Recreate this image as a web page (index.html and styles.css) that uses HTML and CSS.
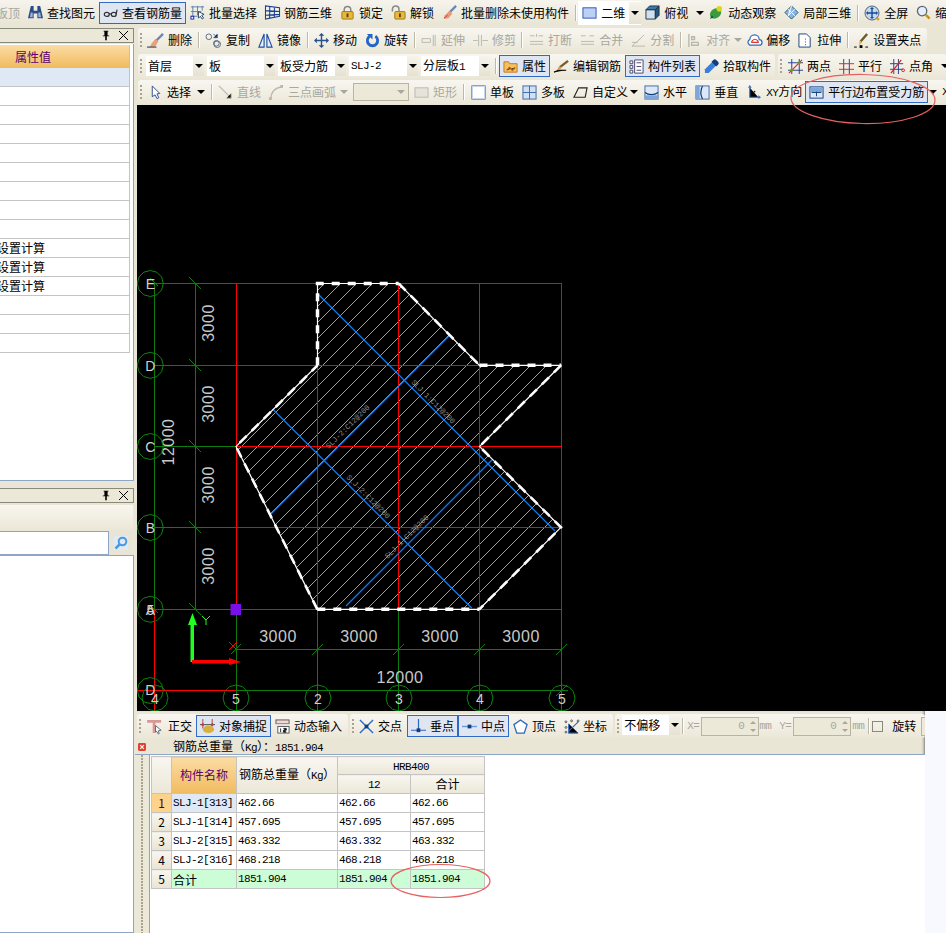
FILE: index.html
```html
<!DOCTYPE html>
<html lang="zh">
<head>
<meta charset="utf-8">
<title>钢筋总重量</title>
<link rel="stylesheet" href="styles.css">
</head>
<body>
<div class="app">
  <header class="topbar">
    <div class="tool off first">板顶</div>
    <div class="tool"><svg class="ic" viewBox="0 0 16 16"><path fill="#2b4c86" d="M3 1h3v5h4V1h3l3 13H10V9H6v5H0z"/><path fill="#9db4d8" d="M3 8h2v5H2zM11 8h2l1 5h-3z"/></svg>查找图元</div>
    <div class="tool on"><svg class="ic" viewBox="0 0 16 16"><g fill="none" stroke="#333" stroke-width="1.3"><ellipse cx="4" cy="10" rx="2.6" ry="2.2"/><ellipse cx="11.5" cy="10" rx="2.6" ry="2.2"/><path d="M6.5 9.5h2.4M14 10l1-5"/></g></svg>查看钢筋量</div>
    <div class="tool"><svg class="ic" viewBox="0 0 16 16"><path fill="none" stroke="#5a7fb5" d="M1 2h14M1 7h11M1 12h7M3 1v13M8 1v10M13 1v5"/><path fill="#fff" stroke="#246" d="M9 7l6 3-2.5 1 2 3-1.5 1-2-3-2 2z"/><rect x="1" y="12" width="3" height="3" fill="#fff" stroke="#12a"/></svg>批量选择</div>
    <div class="tool"><svg class="ic" viewBox="0 0 16 16"><path fill="none" stroke="#1c3f94" stroke-width="1.1" d="M.5 1v14l15-3V3zM.5 6l15 1M.5 11l15-1M5 1v13M10 2v11"/></svg>钢筋三维</div>
    <div class="tool"><svg class="ic" viewBox="0 0 16 16"><path fill="none" stroke="#888" stroke-width="1.6" d="M4.5 8V5a3.5 3.5 0 017 0v3"/><rect x="2" y="7" width="12" height="8" rx="1" fill="#e8b83c" stroke="#a07818"/><path fill="#5a4008" d="M7 9h2v4H7z"/></svg>锁定</div>
    <div class="tool"><svg class="ic" viewBox="0 0 16 16"><path fill="none" stroke="#888" stroke-width="1.6" d="M1.5 7V4.500a3.500 3.500 0 017 0V7"/><rect x="4" y="7" width="11" height="8" rx="1" fill="#e8b83c" stroke="#a07818"/><path fill="#5a4008" d="M8.500 9h2v4h-2z"/></svg>解锁</div>
    <div class="tool"><svg class="ic" viewBox="0 0 16 16"><path stroke="#6b86b8" stroke-width="2.500" d="M15 1L8 8"/><path fill="#e89a78" d="M8 6l3 3-4 5-5 1 1-4z"/><path stroke="#d34" d="M2 14l4-3"/></svg>批量删除未使用构件</div>
    <div class="sep"></div>
    <div class="tool white"><svg class="ic" viewBox="0 0 16 16"><rect x="1" y="3" width="14" height="11" fill="#bcd0f4" stroke="#2c50b8"/></svg>二维<span class="caret-box"><span class="caret"></span></span></div>
    <div class="tool pull"><svg class="ic" viewBox="0 0 16 16"><path fill="#cfe0f0" stroke="#234" d="M1 5h10v10H1z"/><path fill="#3c78a8" stroke="#234" d="M1 5l4-4h10l-4 4z"/><path fill="#22567e" stroke="#234" d="M11 5l4-4v10l-4 4z"/></svg>俯视<span class="caret gap-l"></span></div>
    <div class="tool"><svg class="ic" viewBox="0 0 16 16"><ellipse cx="7" cy="9" rx="6.500" ry="5" fill="#3e9a3e" transform="rotate(-35 7 9)"/><circle cx="11" cy="4" r="3" fill="#d8d820"/><path fill="#155" d="M1 15l4-2-2-2z"/></svg>动态观察</div>
    <div class="tool"><svg class="ic" viewBox="0 0 16 16"><path fill="#8ab4e4" stroke="#256" d="M1 8l7-7 7 7-7 7z"/><path stroke="#fff" d="M4.500 4.500l7 7M8 1l-3.500 10.500M11.500 4.500L4.500 11.500"/></svg>局部三维</div>
    <div class="sep"></div>
    <div class="tool"><svg class="ic big" viewBox="0 0 16 16"><circle cx="8" cy="8" r="7" fill="#c8d8ec" stroke="#567"/><path fill="none" stroke="#124a9c" stroke-width="1.400" d="M8 3v10M3 8h10"/><path fill="#124a9c" d="M8 2l2 2H6zM8 14l2-2H6zM2 8l2-2v4zM14 8l-2-2v4z"/><circle cx="14" cy="14" r="1.500" fill="#e8a020"/></svg>全屏</div>
    <div class="tool"><svg class="ic" viewBox="0 0 16 16"><circle cx="6.500" cy="6.500" r="5" fill="#e8eef8" stroke="#567" stroke-width="1.400"/><path stroke="#c89018" stroke-width="2.500" d="M10.500 10.500l4 4"/></svg>缩放</div>
  </header>

  <div class="main">
    <aside class="side">
      <div class="dock-head first-head"><svg class="pin" viewBox="0 0 10 12"><path fill="#000" d="M2 0h6v1H7v5h2v1H6v5H4V7H1V6h2V1H2z"/></svg><svg class="x" viewBox="0 0 9 9"><path stroke="#000" d="M0 0l9 9M9 0L0 9"/></svg></div>
      <div class="prop-panel">
        <div class="prop-hd">属性值</div>
        <div class="prop-row sel-row"></div>
        <div class="prop-row"></div><div class="prop-row"></div><div class="prop-row"></div>
        <div class="prop-row"></div><div class="prop-row"></div><div class="prop-row"></div>
        <div class="prop-row"></div><div class="prop-row"></div>
        <div class="prop-row cut">设置计算</div>
        <div class="prop-row cut">设置计算</div>
        <div class="prop-row cut">设置计算</div>
        <div class="prop-row"></div><div class="prop-row"></div><div class="prop-row"></div>
      </div>
      <div class="dock-head"><svg class="pin" viewBox="0 0 10 12"><path fill="#000" d="M2 0h6v1H7v5h2v1H6v5H4V7H1V6h2V1H2z"/></svg><svg class="x" viewBox="0 0 9 9"><path stroke="#000" d="M0 0l9 9M9 0L0 9"/></svg></div>
      <div class="band"></div>
      <div class="search">
        <div class="search-box"></div>
        <svg class="search-ic" viewBox="0 0 14 14"><rect width="14" height="14" fill="#dfeaf6"/><circle cx="8.500" cy="5.500" r="3.800" fill="none" stroke="#4a9ae0" stroke-width="2"/><path stroke="#4a9ae0" stroke-width="2.500" d="M5.500 8.500L1.500 12.500"/></svg>
      </div>
      <div class="tree"></div>
    </aside>

    <div class="work">
      <div class="rows">
        <div class="row">
          <div class="pill">
            <span class="grip"></span>
            <div class="tool"><svg class="ic wide" viewBox="0 0 18 16"><path stroke="#6b86b8" stroke-width="2.500" d="M17 1L10 8"/><path fill="#e8a078" d="M9 6l3 3-3 5-6 1 2-4z"/><path stroke="#123" d="M0 15h10"/></svg>删除</div>
            <div class="sep"></div>
            <div class="tool"><svg class="ic wide" viewBox="0 0 18 16"><g fill="none" stroke="#5a6a80"><circle cx="4" cy="4" r="3"/><circle cx="12" cy="11" r="3"/><circle cx="13" cy="12" r="3.500"/></g><path stroke="#2c6ac0" d="M9 1l4 4M13 1v4H9"/></svg>复制</div>
            <div class="tool"><svg class="ic" viewBox="0 0 16 16"><path fill="#e6eefa" stroke="#1e4fa0" stroke-width="1.200" d="M6.500 1v14H1zM9.500 1v14H15z"/></svg>镜像</div>
            <div class="sep"></div>
            <div class="tool"><svg class="ic" viewBox="0 0 16 16"><path stroke="#25528f" stroke-width="1.500" d="M8 2v12M2 8h12"/><path fill="#25528f" d="M8 0l3 3H5zM8 16l3-3H5zM0 8l3-3v6zM16 8l-3-3v6z"/></svg>移动</div>
            <div class="tool"><svg class="ic" viewBox="0 0 16 16"><path fill="none" stroke="#2466c8" stroke-width="3" d="M5 3.500a5.500 5.500 0 106 0"/><path fill="#2466c8" d="M2 1h6v6z"/></svg>旋转</div>
            <div class="sep"></div>
            <div class="tool off shift"><svg class="ic" viewBox="0 0 16 16"><path fill="none" stroke="#b8b8b0" d="M0 6h9v4H0zM12 2v12M14 2v12"/></svg>延伸</div>
            <div class="tool off pull1"><svg class="ic" viewBox="0 0 16 16"><path fill="none" stroke="#b8b8b0" d="M6 2v12M9 2v12M0 8h5M10 8h6"/></svg>修剪</div>
            <div class="sep"></div>
            <div class="tool off shift"><svg class="ic" viewBox="0 0 16 16"><path fill="none" stroke="#b8b8b0" d="M1 3h5M10 3h5M1 12h14M1 9h14M8 1v3"/></svg>打断</div>
            <div class="tool off"><svg class="ic" viewBox="0 0 16 16"><path fill="none" stroke="#b8b8b0" d="M1 3h5M10 3h5M1 12h14M1 9h14"/></svg>合并</div>
            <div class="tool off"><svg class="ic" viewBox="0 0 16 16"><path fill="none" stroke="#b8b8b0" d="M1 14h14M1 14L10 6M14 2L7 9M1 10h6"/></svg>分割</div>
            <div class="sep"></div>
            <div class="tool off pull"><svg class="ic" viewBox="0 0 16 16"><path fill="none" stroke="#b8b8b0" stroke-width="1.500" d="M2 1v14M5 4h3v3H5zM5 10h7v3H5z"/></svg>对齐<span class="caret gray"></span></div>
            <div class="tool"><svg class="ic" viewBox="0 0 16 16"><path fill="#fff" stroke="#2c6ac0" stroke-width="1.300" d="M2 12a3 3 0 011-5 5 5 0 0110 0 3 3 0 010 6H3z"/><path fill="none" stroke="#d33" stroke-width="1.200" d="M5 10a2 2 0 011-2 3 3 0 015 0 2 2 0 011 2z"/></svg>偏移</div>
            <div class="tool"><svg class="ic" viewBox="0 0 16 16"><path fill="#fff" stroke="#1c3f78" d="M1 1h8l4 4v10H1z"/><path stroke="#1c3f78" stroke-dasharray="1 2" d="M8 6v8"/></svg>拉伸</div>
            <div class="sep"></div>
            <div class="tool"><svg class="ic" viewBox="0 0 16 16"><path stroke="#6a5a30" stroke-width="2.500" d="M14 1L7 9"/><path fill="#e8b83c" d="M6 8l3 2-4 3z"/><path stroke="#000" d="M0 15h3M12 15h3"/><rect x="6" y="13" width="3" height="3"/></svg>设置夹点</div>
          </div>
        </div>
        <div class="row">
          <div class="pill flush">
            <span class="grip"></span>
            <div class="sel w58"><span>首层</span><span class="caret-box"><span class="caret"></span></span></div>
            <div class="sel w68"><span>板</span><span class="caret-box"><span class="caret"></span></span></div>
            <div class="sel w68"><span>板受力筋</span><span class="caret-box"><span class="caret"></span></span></div>
            <div class="sel w69"><span class="m">SLJ-2</span><span class="caret-box"><span class="caret"></span></span></div>
            <div class="sel w69"><span>分层板<span class="m">1</span></span><span class="caret-box"><span class="caret"></span></span></div>
            <div class="sep"></div>
            <div class="tool on shift"><svg class="ic" viewBox="0 0 16 16"><path fill="#f4c060" stroke="#c07818" d="M1 3h5l1 2h8v9H1z"/><path stroke="#b06010" stroke-width="1.500" d="M4 12l3-3 3 3 3-3"/></svg>属性</div>
            <div class="tool"><svg class="ic" viewBox="0 0 16 16"><path stroke="#7a5a30" stroke-width="2.500" d="M15 2L6 9"/><path fill="#d8a040" d="M6 7l2 3-5 2z"/><path stroke="#000" stroke-width="1.300" d="M0 14l5-2h8"/></svg>编辑钢筋</div>
            <div class="tool on"><svg class="ic" viewBox="0 0 16 16"><g fill="#fff" stroke="#446"><path d="M1 2h3v3H1zM1 7h3v3H1zM1 12h3v3H1z"/><path d="M6 1h9v14H6z"/></g><path stroke="#446" d="M8 4h5M8 8h5M8 12h5"/></svg>构件列表</div>
            <div class="tool"><svg class="ic" viewBox="0 0 16 16"><path fill="#3a80d8" d="M9 3l4 4-8 8H1v-4z"/><path fill="#123e7c" d="M10 1a2 2 0 013 0l2 2a2 2 0 010 3l-2 2-5-5z"/></svg>拾取构件</div>
          </div>
          <div class="pill second">
            <span class="grip"></span>
            <div class="tool"><svg class="ic" viewBox="0 0 16 16"><path stroke="#1c3f94" d="M4 0v16M12 0v16M0 4h16M0 12h16"/><path stroke="#e02020" stroke-width="1.200" d="M1 15L15 1"/><circle cx="4" cy="12" r="1.500" fill="#6a9a20"/><circle cx="12" cy="4" r="1.500" fill="#6a9a20"/></svg>两点</div>
            <div class="tool"><svg class="ic" viewBox="0 0 16 16"><path stroke="#1c3f94" d="M5 0v16M11 0v16"/><path stroke="#e02020" d="M0 5h16M0 11h16"/></svg>平行</div>
            <div class="tool"><svg class="ic" viewBox="0 0 16 16"><path stroke="#1c3f94" d="M4 0v16M9 0v16M0 5h14M0 11h14"/><path stroke="#e02020" stroke-width="1.300" d="M1 15L12 1"/><circle cx="14" cy="12" r="1.500" fill="none" stroke="#e02020"/></svg>点角<span class="caret gap-l"></span></div>
          </div>
        </div>
        <div class="row">
          <div class="pill fill">
            <span class="grip"></span>
            <div class="tool pick"><svg class="ic narrow" viewBox="0 0 10 16"><path fill="#fff" stroke="#2a4a90" d="M1 1l8 8-3 .5 2 4-2 1-2-4-3 2z"/></svg>选择<span class="caret"></span></div>
            <div class="sep"></div>
            <div class="tool off"><svg class="ic" viewBox="0 0 16 16"><path stroke="#b8b8b0" stroke-width="1.300" d="M1 1l13 13"/><path stroke="#b8b8b0" d="M14 9v5H9"/></svg>直线</div>
            <div class="tool off"><svg class="ic" viewBox="0 0 16 16"><path fill="none" stroke="#b8b8b0" stroke-width="1.300" d="M2 15C2 8 6 3 14 2"/><rect x="0" y="13" width="3" height="3" fill="#b8b8b0"/><rect x="12" y="0" width="3" height="3" fill="#b8b8b0"/></svg>三点画弧<span class="caret gray"></span></div>
            <div class="dis-sel"><span class="caret gray"></span></div>
            <div class="tool off"><svg class="ic" viewBox="0 0 16 16"><rect x="1" y="3" width="14" height="10" fill="#e6e4da" stroke="#b8b8b0"/></svg>矩形</div>
            <div class="sep"></div>
            <div class="tool shift"><svg class="ic" viewBox="0 0 16 16"><rect x="1" y="1" width="14" height="14" fill="#fff" stroke="#2c50b8"/><rect x="1.500" y="1.500" width="13" height="13" fill="none" stroke="#c8d8f4"/></svg>单板</div>
            <div class="tool"><svg class="ic" viewBox="0 0 16 16"><rect x="1" y="1" width="14" height="14" fill="#cfe0f4" stroke="#3c68a8"/><path stroke="#3c68a8" d="M8 1v14M1 8h14"/></svg>多板</div>
            <div class="tool pull2"><svg class="ic" viewBox="0 0 16 16"><path fill="none" stroke="#222" stroke-width="1.200" d="M6 3h9l-2 10H1z"/></svg>自定义<span class="caret back"></span></div>
            <div class="tool"><svg class="ic" viewBox="0 0 16 16"><rect x="1" y="1" width="14" height="14" fill="#dce8f8" stroke="#3c68a8"/><path fill="none" stroke="#123e7c" stroke-width="1.300" d="M1 8c4 3 10 3 14 0"/><rect x="1" y="11" width="14" height="4" fill="#7ea6d8"/></svg>水平</div>
            <div class="tool"><svg class="ic" viewBox="0 0 16 16"><rect x="1" y="1" width="14" height="14" fill="#dce8f8" stroke="#3c68a8"/><rect x="1" y="1" width="4" height="14" fill="#7ea6d8"/><path fill="none" stroke="#123e7c" stroke-width="1.300" d="M8 1c-2 4-2 10 0 14"/></svg>垂直</div>
            <div class="tool xy pull1"><svg class="ic wide" viewBox="0 0 18 16"><path stroke="#2c6ac0" stroke-width="1.200" d="M4 3v10h9"/><path fill="#2c6ac0" d="M4 0l2 3H2zM16 13l-3-2v4z"/><circle cx="9" cy="7" r="1" fill="#222"/></svg><span><span class="m">XY</span>方向</span></div>
            <div class="tool on"><svg class="ic" viewBox="0 0 16 16"><rect x="1" y="2" width="14" height="12" fill="#dce8f8" stroke="#123e7c"/><path fill="#7ea6d8" d="M2 3h12v5H2z"/><path stroke="#123e7c" d="M8 7v5M3 8h10"/></svg>平行边布置受力筋</div>
            <span class="caret gap-s"></span>
            <span class="trail m">X</span>
          </div>
        </div>
      </div>

      <svg class="cad" viewBox="137 105 809 606" role="img" aria-label="板受力筋布置图">
        <defs>
          <pattern id="hatch" patternUnits="userSpaceOnUse" width="16" height="16">
            <path d="M-2 18L18 -2M-2 2L2 -2M14 18L18 14" stroke="#c8c8c8" stroke-width=".8"/>
          </pattern>
          <polygon id="bubble" points="13,0 11.300,6.500 6.500,11.300 0,13 -6.500,11.300 -11.300,6.500 -13,0 -11.300,-6.500 -6.500,-11.300 0,-13 6.500,-11.300 11.300,-6.500" fill="none" stroke="#0c860c"/>
        </defs>
        <rect x="137" y="105" width="809" height="606" fill="#000"/>
        <g class="gl">
          <path d="M154.500 283.500H236M154.500 365.500H236M154.500 446.500H236M154.500 527.500H236M154.500 609.500H236M236 690.500H568M236 649.500H561"/>
          <path d="M154.500 283V609M195.500 283V609M236.500 609V711M317.500 609V711M398.500 609V711M479.500 609V711M561.500 609V711"/>
          <path d="M189 277l12 12M189 359l12 12M189 440l12 12M189 521l12 12M189 603l12 12M150 278l8 8M150 605l8 8M231 654l10-10M312 655l11-11M393 655l11-11M474 655l11-11M556 655l11-11M556 696l11-11"/>
        </g>
        <path fill="url(#hatch)" d="M317.500 283.500H398.700L479.500 365.300H561L479.500 446.500L561 527.300L479.300 609.300H317.300L236 446.500L317.500 365.300Z"/>
        <g class="rl">
          <path d="M236 283.500H561.500M236 365.500H561.500M236 446.500H561.500M236 527.500H561.500M236 609.500H561.500M137 690.500H236"/>
          <path d="M236.500 283V609M317.500 283V609M398.500 283V609M479.500 283V609M561.500 283V609M154.500 609V711"/>
        </g>
        <g class="bl">
          <path d="M318 294L555 531M272.500 409L471.700 608M450 335L271 514M492.700 459.300L346 606"/>
        </g>
        <path class="edge-thin" d="M317.500 283.500H398.700L479.500 365.300H561L479.500 446.500L561 527.300L479.300 609.300H317.300L236 446.500L317.500 365.300Z"/>
        <path class="edge-dash" d="M317.500 365.300V283.500H398.700M479.500 365.300H561M317.300 609.300H479.300"/>
        <path class="edge-diag" d="M398.700 283.500L479.500 365.300M561 365.300L479.500 446.500L561 527.300L479.300 609.300M317.300 609.300L236 446.500L317.500 365.300"/>
        <g class="lbl">
          <text transform="translate(433 402) rotate(45)">SLJ-1:C12@200</text>
          <text transform="translate(348 427) rotate(-45)">SLJ-2:C12@200</text>
          <text transform="translate(368 497) rotate(45)">SLJ-2:C12@200</text>
          <text transform="translate(407 537) rotate(-45)">SLJ-1:C12@200</text>
        </g>
        <g class="dim">
          <text transform="translate(210 323) rotate(-90)">3000</text>
          <text transform="translate(210 404) rotate(-90)">3000</text>
          <text transform="translate(210 485) rotate(-90)">3000</text>
          <text transform="translate(210 566) rotate(-90)">3000</text>
          <text transform="translate(170 442) rotate(-90)">12000</text>
          <text x="278" y="638">3000</text>
          <text x="359" y="638">3000</text>
          <text x="440" y="638">3000</text>
          <text x="521" y="638">3000</text>
          <text x="400" y="679">12000</text>
        </g>
        <use href="#bubble" x="150.300" y="283.500"/>
        <use href="#bubble" x="150.300" y="365.300"/>
        <use href="#bubble" x="150.300" y="446.500"/>
        <use href="#bubble" x="150.300" y="527.500"/>
        <use href="#bubble" x="150.300" y="609.300"/>
        <use href="#bubble" x="150.300" y="690.500"/>
        <use href="#bubble" x="155" y="698"/>
        <use href="#bubble" x="236" y="698"/>
        <use href="#bubble" x="318" y="698"/>
        <use href="#bubble" x="399" y="698"/>
        <use href="#bubble" x="480" y="698"/>
        <use href="#bubble" x="562" y="698"/>
        <g class="axis">
          <text x="150.300" y="284">E</text>
          <text x="150.300" y="366">D</text>
          <text x="150.300" y="447">C</text>
          <text x="150.300" y="528">B</text>
          <text x="150.300" y="610">A</text>
          <text x="150.300" y="610">5</text>
          <text x="150.300" y="690">D</text>
          <text x="155" y="699">4</text>
          <text x="236" y="699">5</text>
          <text x="318" y="699">2</text>
          <text x="399" y="699">3</text>
          <text x="480" y="699">4</text>
          <text x="562" y="699">5</text>
        </g>
        <rect x="230.500" y="604" width="10.500" height="11" fill="#7a10e8"/>
        <path fill="#1eff1e" d="M190.500 662V625H188L192.500 613L197 625H194V662Z"/>
        <path fill="#f00" d="M192 660H229V658L241 662L229 665V663.500H192Z"/>
        <path fill="none" stroke="#1eff1e" d="M202 616l4 4 4-4M206 620v5"/>
        <path fill="none" stroke="#f00" d="M229 642l8 8M237 642l-8 8"/>
      </svg>

      <section class="bottom">
        <div class="bottom-main">
          <div class="snapbar">
            <div class="pill">
              <span class="grip"></span>
              <div class="tool shift"><svg class="ic wide" viewBox="0 0 18 16"><path fill="#d89898" d="M0 1h15v3H9v11H6V4H0z"/><path fill="#fff" stroke="#567" d="M9 7l6 5-3 .5 1 3-1 .5-2-3-1 1z"/></svg>正交</div>
              <div class="tool on"><svg class="ic" viewBox="0 0 16 16"><path stroke="#a84040" d="M3 0v10M13 0v8"/><path stroke="#444" d="M0 6h16"/><ellipse cx="9" cy="11" rx="6" ry="4" fill="#d8b040"/><circle cx="3" cy="6" r="1.500" fill="#c04040"/><circle cx="13" cy="6" r="1.500" fill="#c04040"/></svg>对象捕捉</div>
              <div class="tool"><svg class="ic" viewBox="0 0 16 16"><rect x="1" y="1" width="14" height="4" fill="#f4d8d0" stroke="#555"/><rect x="1" y="5" width="14" height="2" fill="#ddd"/><rect x="3" y="8" width="12" height="7" fill="#fff" stroke="#555"/><path stroke="#222" d="M6 10v4M9 10h3v2H9v2h3"/></svg>动态输入</div>
            </div>
            <div class="pill">
              <span class="grip"></span>
              <div class="tool"><svg class="ic" viewBox="0 0 16 16"><path stroke="#2c6ac0" stroke-width="1.500" d="M1 1l14 14M15 1L1 15"/><rect x="6" y="6" width="4" height="4" fill="#123e7c"/></svg>交点</div>
              <div class="tool on shift"><svg class="ic" viewBox="0 0 16 16"><path stroke="#2c6ac0" stroke-width="1.300" d="M8 0v12M0 12h16"/><rect x="6" y="10" width="4" height="4" fill="#123e7c"/></svg>垂点</div>
              <div class="tool on"><svg class="ic" viewBox="0 0 16 16"><path stroke="#6a9ae0" stroke-width="1.500" d="M0 8h16"/><rect x="6" y="6" width="4" height="4" fill="#123e7c"/></svg>中点</div>
              <div class="tool"><svg class="ic" viewBox="0 0 16 16"><path fill="#fff" stroke="#2c6ac0" stroke-width="1.400" d="M8 1l7 5-3 9H4L1 6z"/></svg>顶点</div>
              <div class="tool snug"><svg class="ic wide" viewBox="0 0 18 16"><path stroke="#2c6ac0" stroke-width="1.200" d="M5 5v10h10M5 13L15 3"/><g fill="none" stroke="#333" stroke-width=".8"><circle cx="2" cy="3" r="1"/><circle cx="2" cy="9" r="1"/><circle cx="2" cy="14" r="1"/><circle cx="15" cy="2" r="1"/><circle cx="8" cy="2" r="1"/></g></svg>坐标</div>
            </div>
            <div class="pill last">
              <span class="grip"></span>
              <div class="sel w58 top-al"><span>不偏移</span><span class="caret-box"><span class="caret"></span></span></div>
              <div class="sep"></div>
              <span class="dim-lbl x-lbl m">X=</span>
              <div class="spin"><span class="m">0</span><span class="spin-arrows"><i class="up"></i><i class="dn"></i></span></div>
              <span class="dim-lbl m">mm</span>
              <span class="dim-lbl m y-lbl">Y=</span>
              <div class="spin"><span class="m">0</span><span class="spin-arrows"><i class="up"></i><i class="dn"></i></span></div>
              <span class="dim-lbl mm2 m">mm</span>
              <div class="sep"></div>
              <span class="check"></span>
              <span class="rot">旋转</span>
              <span class="spin cut-spin"></span>
            </div>
          </div>
          <div class="report-title">
            <svg class="close" viewBox="0 0 11 11"><rect width="11" height="11" rx="2" fill="#e04030"/><path stroke="#fff" stroke-width="1.500" d="M3 3l5 5M8 3L3 8"/></svg>
            <span>钢筋总重量（<span class="m">Kg</span>）：<span class="m">1851.904</span></span>
          </div>
          <div class="report">
            <div class="strip"></div>
            <div class="report-body">
              <table class="grid">
                <colgroup><col class="c0"><col class="c1"><col class="c2"><col class="c3"><col class="c4"></colgroup>
                <thead>
                  <tr class="h1"><th rowspan="2" class="rh"></th><th rowspan="2" class="orange">构件名称</th><th rowspan="2" class="left">钢筋总重量（<span class="m">Kg</span>）</th><th colspan="2"><span class="m">HRB400</span></th></tr>
                  <tr class="h2"><th><span class="m">12</span></th><th>合计</th></tr>
                </thead>
                <tbody>
                  <tr class="cur"><th class="rh">1</th><td class="m">SLJ-1[313]</td><td class="m">462.66</td><td class="m">462.66</td><td class="m">462.66</td></tr>
                  <tr><th class="rh">2</th><td class="m">SLJ-1[314]</td><td class="m">457.695</td><td class="m">457.695</td><td class="m">457.695</td></tr>
                  <tr><th class="rh">3</th><td class="m">SLJ-2[315]</td><td class="m">463.332</td><td class="m">463.332</td><td class="m">463.332</td></tr>
                  <tr><th class="rh">4</th><td class="m">SLJ-2[316]</td><td class="m">468.218</td><td class="m">468.218</td><td class="m">468.218</td></tr>
                  <tr class="sum"><th class="rh">5</th><td>合计</td><td class="m">1851.904</td><td class="m">1851.904</td><td class="m">1851.904</td></tr>
                </tbody>
              </table>
            </div>
          </div>
        </div>
        <div class="outside"></div>
      </section>
    </div>
  </div>

  <svg class="marks" viewBox="0 0 946 933" aria-hidden="true">
    <ellipse cx="863" cy="99" rx="72" ry="24.500" transform="rotate(1 863 99)"/>
    <ellipse cx="440.500" cy="881" rx="49.500" ry="16.500"/>
  </svg>
</div>
</body>
</html>
```
FILE: styles.css
```css
* { box-sizing: border-box; }
html, body { margin: 0; padding: 0; }
body { font: 12px/1 "Noto Sans CJK SC", "Liberation Sans", sans-serif; color: #000; background: #ece9d8; }
.app { position: relative; width: 946px; height: 933px; overflow: hidden; background: #eae6d6; }
.m { font-family: "Liberation Mono", "Noto Sans CJK SC", monospace; font-size: 11px; letter-spacing: -.6px; }

/* top bar */
.topbar { display: flex; align-items: center; height: 25px; overflow: hidden; white-space: nowrap;
  background: linear-gradient(#f6f4ec, #e9e5d5); }
.tool { display: flex; flex: none; align-items: center; gap: 4px; height: 22px; padding: 0 3px; white-space: nowrap; border: 1px solid transparent; }
.ic { flex: none; width: 15px; height: 15px; overflow: visible; }
.ic.wide { width: 17px; }
.ic.big { width: 16px; height: 16px; }
.ic.narrow { width: 10px; }
.tool.off { color: #a8a8a0; }
.tool.first { margin-left: -8px; }
.tool.on { background: #dfe6f2; border-color: #316ac5; }
.tool.white { background: #fff; height: 24px; padding-right: 0; gap: 4px; width: 63px; }
.tool.shift { margin-left: 1px; }
.tool.pull { margin-right: -3px; }
.tool.pull1 { margin-right: -1px; }
.tool.pull2 { margin-right: -2px; }
.tool.snug { gap: 2px; }
.sep { flex: none; width: 1px; height: 16px; margin: 0 2px; background: #bdb9a8; box-shadow: 1px 0 #fff; }
.caret { display: inline-block; flex: none; width: 0; height: 0; border: 4px solid transparent; border-top-color: #000; border-bottom: 0; }
.caret.gray { border-top-color: #a8a8a0; }
.caret.gap-l { margin-left: 4px; }
.caret.gap-s { margin-left: 1px; }
.caret.back { margin-left: -2px; }
.caret-box { display: flex; flex: none; align-items: center; justify-content: center; width: 11px; height: 100%; margin-left: auto; background: linear-gradient(#f6f4ec, #e6e2d2); }
.tool.white .caret-box { width: 12px; }

/* layout */
.main { display: flex; height: 908px; }
.side { display: flex; flex: none; flex-direction: column; width: 135px; height: 908px; background: #eae6d6; }
.work { display: flex; flex: none; flex-direction: column; width: 811px; height: 908px; }

/* dock */
.dock-head { display: flex; flex: none; align-items: center; justify-content: flex-end; gap: 9px; width: 134px; height: 15px; padding-right: 5px;
  background: #ebe8d8; border: 1px solid #8a8a7c; border-left: 0; }
.first-head { margin-top: 3px; }
.pin { width: 8px; height: 11px; }
.x { width: 9px; height: 9px; }
.prop-panel { flex: none; width: 134px; height: 437px; margin-top: 1px; margin-bottom: 7px; background: #fff; border-right: 1px solid #8ea6c6; border-bottom: 1px solid #8ea6c6; padding-right: 3px; }
.prop-hd { height: 23px; margin-top: 1px; padding: 5px 0 0 15px; color: #5a0070; background: linear-gradient(#fbdca4, #f1bb5f); border-right: 1px solid #c0c0c0; line-height: 14px; }
.prop-row { height: 19px; border-bottom: 1px solid #c4c4c4; border-right: 1px solid #c4c4c4; line-height: 18px; white-space: nowrap; overflow: hidden; }
.prop-row.sel-row { background: #dfe8f5; }
.prop-row.cut { text-indent: -3px; }
.band { flex: none; width: 133px; height: 25px; margin-top: 2px; background: linear-gradient(#f8f6ef, #ebe7d8); }
.search { display: flex; flex: none; align-items: center; width: 133px; height: 24px; margin-top: 1px; background: #e8e5d6; }
.search-box { width: 109px; height: 24px; background: #fff; border: 1px solid #8ea6c6; border-left: 0; }
.search-ic { width: 14px; height: 14px; margin-left: 5px; }
.tree { flex: 1; width: 134px; background: #fff; border: 1px solid #8ea6c6; border-left: 0; }

/* toolbars */
.rows { display: flex; flex: none; flex-direction: column; gap: 2px; height: 80px; padding: 3px 0 0 3px; overflow: hidden; }
.row { display: flex; flex: none; gap: 3px; height: 24px; }
.pill { display: flex; flex: none; align-items: center; height: 24px; padding-right: 2px; border-radius: 3px; background: linear-gradient(#f8f6f0, #ebe7d8); }
.pill.flush { padding-right: 0; }
.pill.fill { flex: 1; min-width: 0; overflow: hidden; padding-right: 0; }
.grip { flex: none; width: 2px; height: 15px; margin: 0 1px 0 2px; background: repeating-linear-gradient(#a8a490 0 2px, transparent 2px 4px); }
.second .grip { margin-right: 2px; }
.sel { display: flex; flex: none; align-items: center; justify-content: space-between; height: 20px; margin-right: 3px; padding-left: 2px; background: #fff; white-space: nowrap; }
.grip + .sel { margin-left: 3px; }
.w58 { width: 58px; }
.w68 { width: 68px; }
.w69 { width: 69px; }
.pill.second { padding-right: 0; flex: 1; min-width: 0; overflow: hidden; }
.tool.pick { gap: 6px; margin-left: 4px; }
.tool.xy { gap: 3px; }
.dis-sel { display: flex; flex: none; align-items: center; justify-content: flex-end; width: 56px; height: 18px; margin: 0 1px; padding-right: 3px; border: 1px solid #b8b4a0; background: #ece9d8; }
.trail { margin-left: 5px; }

/* canvas */
.cad { display: block; flex: none; width: 809px; height: 606px; margin-left: 2px; }
.gl path { fill: none; stroke: #0c7c0c; }
.rl path { fill: none; stroke: #f00; }
.bl path { fill: none; stroke: #1078f0; stroke-width: 1.300; }
.edge-thin { fill: none; stroke: #fff; stroke-width: 1.200; }
.edge-dash { fill: none; stroke: #fff; stroke-width: 3.500; stroke-dasharray: 8 8; }
.edge-diag { fill: none; stroke: #fff; stroke-width: 2.600; stroke-dasharray: 10 7; }
.lbl text { fill: #8c8c8c; font: 7.500px "Liberation Mono", monospace; text-anchor: middle; dominant-baseline: middle; }
.dim text { fill: #c8c8c8; font: 16px "Liberation Sans", sans-serif; text-anchor: middle; dominant-baseline: middle; letter-spacing: .5px; }
.axis text { fill: #d0d0d0; font: 14px "Liberation Sans", sans-serif; text-anchor: middle; dominant-baseline: central; }

/* bottom */
.bottom { display: flex; flex: 1; min-height: 0; }
.bottom-main { display: flex; flex: none; flex-direction: column; width: 790px; background: #eae6d6; box-shadow: inset -3px 0 3px -2px #777; }
.outside { flex: 1; background: #f8f9ff; }
.snapbar { display: flex; flex: none; gap: 2px; height: 27px; padding: 3px 0 0 2px; overflow: hidden; }
.pill.last { flex: 1; min-width: 0; padding-right: 0; overflow: hidden; }
.grip + .sel.top-al { align-self: flex-start; margin: 1px 0 0 2px; }
.dim-lbl { flex: none; margin-right: 2px; color: #a8a8a0; }
.x-lbl { margin-left: 2px; }
.y-lbl { margin-left: 6px; }
.mm2 { margin-left: 1px; }
.spin { display: flex; flex: none; align-items: center; justify-content: flex-end; width: 58px; height: 19px; padding-right: 2px; gap: 6px; border: 1px solid #b8b4a0; color: #a8a8a0; background: #ece9d8; }
.spin-arrows { display: flex; flex-direction: column; gap: 5px; }
.spin-arrows i { display: block; width: 0; height: 0; border: 3px solid transparent; }
.spin-arrows .up { border-top: 0; border-bottom-color: #a8a8a0; }
.spin-arrows .dn { border-bottom: 0; border-top-color: #a8a8a0; }
.check { flex: none; width: 11px; height: 11px; margin-left: 1px; border: 1px solid #8a8a7c; }
.rot { flex: none; margin-left: 9px; }
.cut-spin { margin-left: 5px; }
.report-title { display: flex; flex: none; align-items: center; height: 17px; padding: 2px 0 0 3px; border-bottom: 1px solid #8ea6c6; }
.close { flex: none; width: 8px; height: 8px; margin-right: 27px; }
.report { display: flex; flex: 1; min-height: 0; }
.strip { flex: none; width: 15px; border-right: 1px solid #8ea6c6; background: #ebe8d8 radial-gradient(circle at 7px 1px, #a8a490 1px, transparent 1.2px) 0 0 / 14px 3px; }
.report-body { flex: 1; padding: 1px 0 0 1px; background: #fff; }
.grid { width: 333px; table-layout: fixed; border-collapse: collapse; }
.c0 { width: 20px; }
.c1 { width: 65px; }
.c2 { width: 101px; }
.c3 { width: 73px; }
.c4 { width: 74px; }
.grid th, .grid td { padding: 0 0 0 1px; border: 1px solid #c4c4c4; font-weight: 400; white-space: nowrap; overflow: hidden; }
.grid td { padding-top: 1px; }
.grid thead th { text-align: center; background: linear-gradient(#f8f6ef, #ebe7d8); padding: 0; }
.grid thead th.left { text-align: left; padding-left: 2px; }
.grid thead th.orange { color: #5a0070; background: linear-gradient(#fbdca4, #f1bb5f); }
.grid .h1 { height: 18px; }
.grid .h2 { height: 19px; }
.grid tbody tr { height: 19px; }
.grid tbody .rh { padding: 0; text-align: center; background: linear-gradient(#f8f6ef, #e8e4d4); }
.grid .cur .rh { color: #5a0000; background: #fdd28a; }
.grid .cur td:nth-of-type(1) { background: #dfe8f5; }
.grid .sum td { background: #ccfdd6; }

/* annotation rings */
.marks { position: absolute; left: 0; top: 0; width: 946px; height: 933px; pointer-events: none; }
.marks ellipse { fill: none; stroke: #e86060; stroke-width: 1.200; }
```
